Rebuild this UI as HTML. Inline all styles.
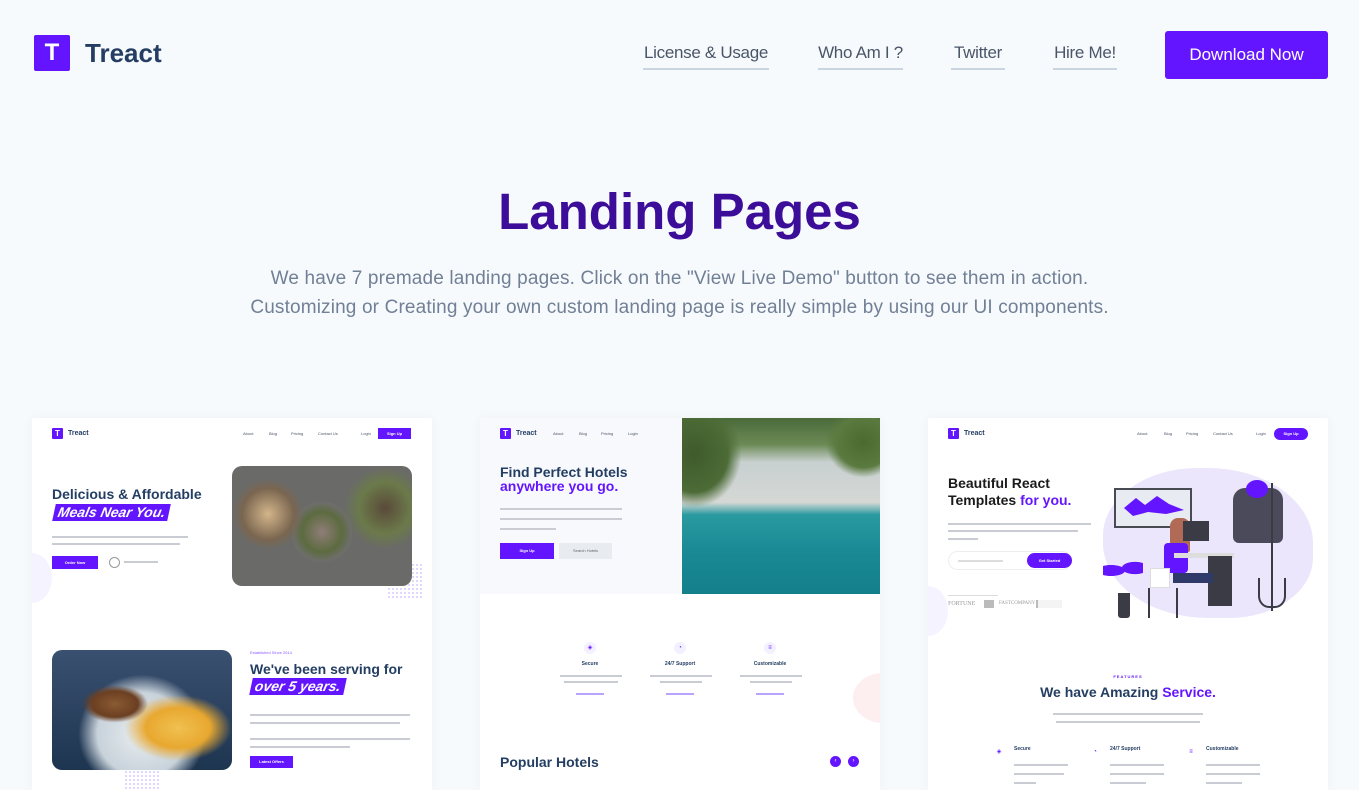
<!DOCTYPE html>
<html><head><meta charset="utf-8"><style>
*{margin:0;padding:0;box-sizing:border-box}
body{width:1359px;height:790px;overflow:hidden;background:#f7fafc;font-family:"Liberation Sans",sans-serif;position:relative}
.a{position:absolute}
.nav a{position:absolute;top:43px;font-size:17px;color:#4a5568;text-decoration:none;padding-bottom:6px;border-bottom:2px solid #cbd5e0;line-height:19px;white-space:nowrap;letter-spacing:-0.3px;text-align:center}
.card{position:absolute;top:418px;width:400px;height:372px;background:#fff;overflow:hidden;box-shadow:0 0 12px rgba(0,0,0,.04)}
.lg{position:absolute;left:20px;top:10px;width:11px;height:11px;background:#6415ff;border-radius:1px;color:#fff;font-size:8px;font-weight:bold;text-align:center;line-height:11px}
.lt{position:absolute;left:36px;top:10px;font-size:7px;font-weight:bold;color:#243e63;line-height:11px}
.sn{position:absolute;top:13px;font-size:4px;color:#4a5568}
.h{position:absolute;font-weight:bold;color:#243e63;font-size:14px;line-height:16px;white-space:nowrap}
.p{position:absolute;height:2px;background:#c9cdd3}
.btn{position:absolute;background:#6415ff;color:#fff;font-size:4px;font-weight:bold;text-align:center}
.hl{position:absolute;background:#6415ff;color:#fff;font-style:italic;font-weight:bold;font-size:14px;transform:skewX(-12deg);padding:0 4px;line-height:17px}
.dots{position:absolute;background-image:radial-gradient(#d6c8ff 0.8px,transparent 1px);background-size:4px 4px}
.ic{position:absolute;width:12px;height:12px;border-radius:50%;background:#f3f0ff;color:#6415ff;font-size:6px;text-align:center;line-height:12px}
.ft{position:absolute;font-size:5px;font-weight:bold;color:#243e63;text-align:center}
</style></head><body>
<div class="a" style="left:34px;top:35px;width:36px;height:36px;background:#6415ff;border-radius:2px;color:#fff;font-weight:bold;font-size:24px;text-align:center;line-height:36px">T</div>
<div class="a" style="left:85px;top:38px;font-size:26px;font-weight:bold;color:#243e63;line-height:30px">Treact</div>
<div class="nav">
<a style="left:643px;width:126px">License &amp; Usage</a>
<a style="left:818px;width:85px">Who Am I ?</a>
<a style="left:951px;width:54px">Twitter</a>
<a style="left:1053px;width:64px">Hire Me!</a>
</div>
<div class="a" style="left:1165px;top:31px;width:163px;height:48px;background:#6415ff;border-radius:3px;color:#fff;font-size:17px;text-align:center;line-height:48px">Download Now</div>
<div class="a" style="left:0;width:1359px;top:182px;text-align:center;font-size:51px;font-weight:bold;color:#3c0d99;line-height:60px">Landing Pages</div>
<div class="a" style="left:0;width:1359px;top:264px;text-align:center;font-size:19px;color:#718096;line-height:29px;letter-spacing:0.15px">We have 7 premade landing pages. Click on the "View Live Demo" button to see them in action.<br>Customizing or Creating your own custom landing page is really simple by using our UI components.</div>

<!-- card 1 -->
<div class="card" style="left:32px">
<div class="lg">T</div><div class="lt">Treact</div>
<div class="sn" style="left:211px">About</div><div class="sn" style="left:237px">Blog</div><div class="sn" style="left:259px">Pricing</div><div class="sn" style="left:286px">Contact Us</div><div class="sn" style="left:329px">Login</div>
<div class="btn" style="left:346px;top:10px;width:33px;height:11px;line-height:11px">Sign Up</div>
<div style="position:absolute;left:-20px;top:135px;width:40px;height:50px;border-radius:50%;background:#f5f3ff"></div>
<div class="h" style="left:20px;top:68px">Delicious &amp; Affordable</div>
<div class="hl" style="left:22px;top:86px">Meals Near You.</div>
<div class="p" style="left:20px;top:118px;width:136px"></div><div class="p" style="left:20px;top:125px;width:128px"></div>
<div class="btn" style="left:20px;top:138px;width:46px;height:13px;line-height:13px">Order Now</div>
<div style="position:absolute;left:77px;top:139px;width:11px;height:11px;border:1px solid #999;border-radius:50%"></div>
<div class="p" style="left:92px;top:143px;width:34px"></div>
<div class="dots" style="left:355px;top:145px;width:36px;height:36px"></div>
<div style="position:absolute;left:200px;top:48px;width:180px;height:120px;border-radius:10px;background:radial-gradient(circle at 20% 40%,#d3b58a 0,#7a6650 16%,transparent 22%),radial-gradient(circle at 50% 55%,#8f7d78 0,#5c6b3f 18%,#6e6e6a 26%,transparent 28%),radial-gradient(circle at 85% 35%,#5a4a3a 0,#6b7a4a 15%,transparent 24%),#6a6a68"></div>
<div class="dots" style="left:92px;top:352px;width:36px;height:20px"></div>
<div style="position:absolute;left:20px;top:232px;width:180px;height:120px;border-radius:10px;background:radial-gradient(ellipse at 35% 45%,#8a5a32 0,#6b3f22 14%,transparent 20%),radial-gradient(ellipse at 70% 65%,#f0c050 0,#e8a830 18%,transparent 30%),radial-gradient(ellipse at 50% 70%,#e8eef2 0,#c8d2da 35%,transparent 50%),linear-gradient(#3a5070,#1e3550)"></div>
<div style="position:absolute;left:218px;top:232px;font-size:4px;color:#8a5cff">Established Since 2014</div>
<div class="h" style="left:218px;top:243px">We've been serving for</div>
<div class="hl" style="left:219px;top:260px">over 5 years.</div>
<div class="p" style="left:218px;top:296px;width:160px"></div><div class="p" style="left:218px;top:304px;width:150px"></div>
<div class="p" style="left:218px;top:320px;width:160px"></div><div class="p" style="left:218px;top:328px;width:100px"></div>
<div class="btn" style="left:218px;top:338px;width:43px;height:12px;line-height:12px">Latest Offers</div>
</div>

<!-- card 2 -->
<div class="card" style="left:480px">
<div style="position:absolute;left:0;top:0;width:202px;height:176px;background:#f7f9fc"></div>
<div class="lg">T</div><div class="lt">Treact</div>
<div class="sn" style="left:73px">About</div><div class="sn" style="left:99px">Blog</div><div class="sn" style="left:121px">Pricing</div><div class="sn" style="left:148px">Login</div>
<div style="position:absolute;left:202px;top:0;width:198px;height:176px;background:linear-gradient(180deg,#4a6a3a 0,#6b8a55 15%,#c8d0d0 25%,#d5d8d5 48%,#2a9aa0 55%,#1a8a95 75%,#137f8a 100%)"></div>
<div style="position:absolute;left:202px;top:0;width:60px;height:90px;background:radial-gradient(ellipse at 20% 40%,#3f5a2c 0,#4c6b36 50%,transparent 70%)"></div>
<div style="position:absolute;left:345px;top:0;width:55px;height:60px;background:radial-gradient(ellipse at 70% 40%,#4a6a30 0,#5a7a40 50%,transparent 70%)"></div>
<div class="h" style="left:20px;top:46px">Find Perfect Hotels</div>
<div class="h" style="left:20px;top:60px;color:#6415ff">anywhere you go.</div>
<div class="p" style="left:20px;top:90px;width:122px"></div><div class="p" style="left:20px;top:100px;width:122px"></div><div class="p" style="left:20px;top:110px;width:56px"></div>
<div class="btn" style="left:20px;top:125px;width:54px;height:16px;line-height:16px">Sign Up</div>
<div style="position:absolute;left:79px;top:125px;width:53px;height:16px;background:#e8ebf0;font-size:4px;color:#666;text-align:center;line-height:16px">Search Hotels</div>
<div class="ic" style="left:104px;top:224px">◈</div><div class="ic" style="left:194px;top:224px">◔</div><div class="ic" style="left:284px;top:224px">≡</div>
<div class="ft" style="left:80px;width:60px;top:243px">Secure</div><div class="ft" style="left:170px;width:60px;top:243px">24/7 Support</div><div class="ft" style="left:260px;width:60px;top:243px">Customizable</div>
<div class="p" style="left:80px;top:257px;width:62px"></div><div class="p" style="left:84px;top:263px;width:54px"></div>
<div class="p" style="left:170px;top:257px;width:62px"></div><div class="p" style="left:180px;top:263px;width:42px"></div>
<div class="p" style="left:260px;top:257px;width:62px"></div><div class="p" style="left:270px;top:263px;width:42px"></div>
<div class="p" style="left:96px;top:275px;width:28px;background:#b9a3ff"></div><div class="p" style="left:186px;top:275px;width:28px;background:#b9a3ff"></div><div class="p" style="left:276px;top:275px;width:28px;background:#b9a3ff"></div>
<div style="position:absolute;left:373px;top:255px;width:60px;height:50px;border-radius:50%;background:#fdeef0"></div>
<div class="h" style="left:20px;top:336px">Popular Hotels</div>
<div style="position:absolute;left:350px;top:338px;width:11px;height:11px;border-radius:50%;background:#6415ff;color:#fff;font-size:6px;text-align:center;line-height:11px">‹</div>
<div style="position:absolute;left:368px;top:338px;width:11px;height:11px;border-radius:50%;background:#6415ff;color:#fff;font-size:6px;text-align:center;line-height:11px">›</div>
</div>

<!-- card 3 -->
<div class="card" style="left:928px">
<div class="lg">T</div><div class="lt">Treact</div>
<div class="sn" style="left:209px">About</div><div class="sn" style="left:236px">Blog</div><div class="sn" style="left:258px">Pricing</div><div class="sn" style="left:285px">Contact Us</div><div class="sn" style="left:328px">Login</div>
<div class="btn" style="left:346px;top:10px;width:34px;height:12px;line-height:12px;border-radius:6px">Sign Up</div>
<div style="position:absolute;left:-20px;top:168px;width:40px;height:50px;border-radius:50%;background:#f5f3ff"></div>
<div class="h" style="left:20px;top:57px;color:#1a1a1a">Beautiful React</div>
<div class="h" style="left:20px;top:74px;color:#1a1a1a">Templates <span style="color:#6415ff">for you.</span></div>
<div class="p" style="left:20px;top:105px;width:143px"></div><div class="p" style="left:20px;top:112px;width:130px"></div><div class="p" style="left:20px;top:120px;width:30px"></div>
<div style="position:absolute;left:20px;top:133px;width:124px;height:19px;border-radius:10px;border:1px solid #eee;background:#fff"></div>
<div class="p" style="left:30px;top:142px;width:45px;background:#ddd"></div>
<div class="btn" style="left:99px;top:135px;width:45px;height:15px;line-height:15px;border-radius:8px">Get Started</div>
<div class="p" style="left:20px;top:177px;width:50px;background:#ddd;height:1px"></div>
<div style="position:absolute;left:20px;top:183px;font-size:6px;color:#999;font-family:'Liberation Serif',serif">FORTUNE</div>
<div style="position:absolute;left:56px;top:182px;width:10px;height:8px;background:#bbb"></div>
<div style="position:absolute;left:71px;top:183px;font-size:5px;color:#999;font-family:'Liberation Serif',serif">FASTCOMPANY</div>
<div style="position:absolute;left:108px;top:182px;width:26px;height:8px;border-left:2px solid #bbb;background:#f4f4f4"></div>
<div style="position:absolute;left:175px;top:50px;width:210px;height:150px;border-radius:45% 50% 40% 50%;background:#ebe6fb"></div>
<div style="position:absolute;left:186px;top:70px;width:78px;height:40px;border:2px solid #4a4a55;background:#e8ecf2"></div>
<div style="position:absolute;left:196px;top:78px;width:60px;height:20px;background:#6415ff;clip-path:polygon(0 60%,20% 10%,35% 45%,55% 0,75% 40%,100% 70%,70% 90%,40% 80%,15% 100%)"></div>
<div style="position:absolute;left:242px;top:100px;width:20px;height:34px;background:#b06a55;border-radius:8px 8px 2px 2px"></div>
<div style="position:absolute;left:236px;top:125px;width:24px;height:30px;background:#6415ff;border-radius:4px"></div>
<div style="position:absolute;left:255px;top:103px;width:26px;height:20px;background:#3b3b45"></div>
<div style="position:absolute;left:246px;top:135px;width:60px;height:5px;background:#ddd"></div>
<div style="position:absolute;left:280px;top:138px;width:24px;height:50px;background:#3b3b45"></div>
<div style="position:absolute;left:245px;top:155px;width:40px;height:10px;background:#2f3a6a"></div>
<div style="position:absolute;left:222px;top:150px;width:20px;height:20px;background:#fff;border:1px solid #ddd"></div>
<div style="position:absolute;left:220px;top:170px;width:30px;height:30px;border-left:2px solid #3b3b45;border-right:2px solid #3b3b45"></div>
<div style="position:absolute;left:190px;top:175px;width:12px;height:25px;background:#3b3b45;border-radius:0 0 3px 3px"></div>
<div style="position:absolute;left:175px;top:140px;width:40px;height:25px;background:radial-gradient(ellipse at 20% 50%,#6415ff 0,#6415ff 30%,transparent 32%),radial-gradient(ellipse at 80% 40%,#6415ff 0,#6415ff 28%,transparent 30%)"></div>
<div style="position:absolute;left:305px;top:70px;width:50px;height:55px;background:#4a4a5a;border-radius:12px 12px 6px 6px"></div>
<div style="position:absolute;left:318px;top:62px;width:22px;height:18px;background:#6415ff;border-radius:50%"></div>
<div style="position:absolute;left:343px;top:65px;width:2px;height:128px;background:#3b3b45"></div>
<div style="position:absolute;left:330px;top:160px;width:28px;height:30px;border:2px solid #3b3b45;border-top:none;border-radius:0 0 40% 40%"></div>
<div style="position:absolute;left:0;width:400px;top:256px;text-align:center;font-size:4px;color:#6415ff;font-weight:bold;letter-spacing:1px">FEATURES</div>
<div class="h" style="left:0;width:400px;text-align:center;top:266px">We have Amazing <span style="color:#6415ff">Service.</span></div>
<div class="p" style="left:125px;top:295px;width:150px"></div><div class="p" style="left:128px;top:303px;width:144px"></div>
<div class="ic" style="left:65px;top:328px;background:#fff">◈</div><div class="ic" style="left:161px;top:328px;background:#fff">◔</div><div class="ic" style="left:257px;top:328px;background:#fff">≡</div>
<div class="ft" style="left:86px;top:328px;text-align:left">Secure</div><div class="ft" style="left:182px;top:328px;text-align:left">24/7 Support</div><div class="ft" style="left:278px;top:328px;text-align:left">Customizable</div>
<div class="p" style="left:86px;top:346px;width:54px"></div><div class="p" style="left:86px;top:355px;width:50px"></div><div class="p" style="left:86px;top:364px;width:22px"></div>
<div class="p" style="left:182px;top:346px;width:54px"></div><div class="p" style="left:182px;top:355px;width:54px"></div><div class="p" style="left:182px;top:364px;width:36px"></div>
<div class="p" style="left:278px;top:346px;width:54px"></div><div class="p" style="left:278px;top:355px;width:54px"></div><div class="p" style="left:278px;top:364px;width:36px"></div>
</div>
</body></html>
